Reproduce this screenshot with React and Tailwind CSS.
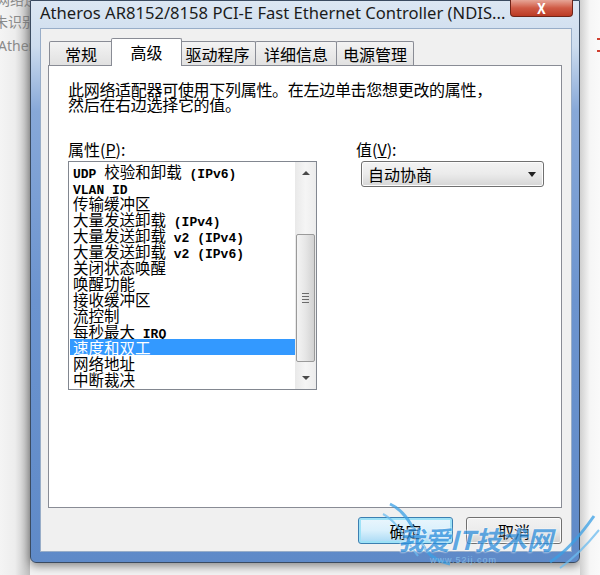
const CJK = /([\u4e00-\u9fff\u3000-\u303f\uff00-\uffef]+)/;

function Mixed({ text }) {
  return text
    .split(CJK)
    .filter(Boolean)
    .map((part, i) =>
      CJK.test(part) ? (
        <span key={i}>{part}</span>
      ) : (
        <span key={i} className="font-['Liberation_Mono'] text-[13px] font-bold whitespace-pre">
          {part}
        </span>
      )
    );
}

const properties = [
  'UDP 校验和卸载 (IPv6)',
  'VLAN ID',
  '传输缓冲区',
  '大量发送卸载 (IPv4)',
  '大量发送卸载 v2 (IPv4)',
  '大量发送卸载 v2 (IPv6)',
  '关闭状态唤醒',
  '唤醒功能',
  '接收缓冲区',
  '流控制',
  '每秒最大 IRQ',
  '速度和双工',
  '网络地址',
  '中断裁决',
];

const tabs = [
  { label: '常规', w: 'w-[64px]' },
  { label: '高级', w: 'w-[71px]', active: true },
  { label: '驱动程序', w: 'w-[77px]' },
  { label: '详细信息', w: 'w-[82px]' },
  { label: '电源管理', w: 'w-[78px]' },
];

function Tab({ label, w, active }) {
  if (active) {
    return (
      <div
        className={`relative z-10 -mx-[2px] -mb-px flex h-[28px] ${w} items-start justify-center rounded-t-[2px] border border-b-0 border-[#898c95] bg-white pt-[3px] text-[16px] leading-[20px]`}
      >
        {label}
      </div>
    );
  }
  return (
    <div
      className={`-ml-px flex h-[24px] ${w} items-start justify-center rounded-t-[2px] border border-b-0 border-[#898c95] bg-gradient-to-b from-[#f3f3f3] to-[#e1e1e1] pt-[2px] text-[16px] leading-[20px]`}
    >
      {label}
    </div>
  );
}

function ScrollBar() {
  return (
    <div className="flex w-[21px] flex-col bg-gradient-to-r from-[#e9e9e9] via-[#f5f5f5] to-[#ececec]">
      <div className="flex h-[18px] items-center justify-center pt-[4px]">
        <div className="h-0 w-0 border-x-[4px] border-b-[4px] border-x-transparent border-b-[#4a4a4a]" />
      </div>
      <div className="h-[54px]" />
      <div className="mx-[1px] flex h-[128px] items-center justify-center rounded-[2px] border border-[#9a9a9a] bg-gradient-to-r from-[#f4f4f4] via-[#e6e6e6] to-[#d2d2d2]">
        <div className="flex flex-col gap-[2px]">
          <div className="h-px w-[7px] bg-[#6b6b6b]" />
          <div className="h-px w-[7px] bg-[#6b6b6b]" />
          <div className="h-px w-[7px] bg-[#6b6b6b]" />
          <div className="h-px w-[7px] bg-[#6b6b6b]" />
        </div>
      </div>
      <div className="flex flex-1 items-end justify-center pb-[9px]">
        <div className="h-0 w-0 border-x-[4px] border-t-[4px] border-x-transparent border-t-[#4a4a4a]" />
      </div>
    </div>
  );
}

function Button({ children, primary }) {
  return (
    <div
      className={`flex h-[27px] items-center justify-center rounded-[3px] border text-[16px] leading-[20px] ${
        primary
          ? 'w-[95px] border-[#3c7fb1] bg-gradient-to-b from-[#eaf6fd] via-[#d9f0fc] to-[#a7d9f5] shadow-[inset_0_0_0_2px_#9ee2f7]'
          : 'w-[96px] border-[#707070] bg-gradient-to-b from-[#f2f2f2] via-[#ebebeb] to-[#cfcfcf] shadow-[inset_0_0_0_1px_#fbfbfb]'
      }`}
    >
      {children}
    </div>
  );
}

export default function App() {
  return (
    <div className="relative h-[575px] w-[600px] overflow-hidden bg-[#f3f3f3] font-['Noto_Sans_CJK_SC',sans-serif] text-black">
      <div className="flex">
        {/* desktop behind the dialog */}
        <div className="flex h-[575px] w-[30px] shrink-0 flex-col overflow-hidden bg-gradient-to-r from-[#f4f4f4] via-[#ededed] to-[#bdbdbd] text-[14px] leading-[16px] text-[#8a8a8a]">
          <div className="-mt-[9px] -ml-[4px] whitespace-nowrap">网络连接</div>
          <div className="mt-[6px] -ml-[6px] whitespace-nowrap">未识别</div>
          <div className="mt-[9px] -ml-[2px] whitespace-nowrap font-['Noto_Sans',sans-serif]">Atheros</div>
        </div>

        {/* dialog window */}
        <div className="flex h-[563px] w-[550px] shrink-0 flex-col rounded-b-[6px] border border-[#3b4b60] bg-[linear-gradient(180deg,#dce7f3_0px,#cddcee_45px,#87a8d8_110px,#6c94cf_300px,#5f8ac8_100%)] shadow-[0_3px_10px_rgba(0,0,0,0.45)]">
          <div className="flex h-[27px] items-start justify-between pl-[9px] pr-[6px]">
            <div className="pt-[2px] font-['Noto_Sans',sans-serif] text-[16.6px] leading-[20px] whitespace-nowrap text-[#1b1b1b]">
              Atheros AR8152/8158 PCI-E Fast Ethernet Controller (NDIS...
            </div>
            <div className="-mt-px flex h-[17px] w-[63px] shrink-0 items-center justify-center rounded-b-[4px] border border-t-0 border-[#6f2418] bg-gradient-to-b from-[#e6a597] via-[#cf5a45] to-[#bb3a24] text-[14px] font-bold leading-none text-white">
              X
            </div>
          </div>

          <div className="ml-[9px] mr-[7px] flex h-[524px] flex-col border border-[#98adc8] bg-[#f0f0f0]">
            {/* tabs */}
            <div className="ml-[9px] mt-[9px] flex items-end">
              {tabs.map((t) => (
                <Tab key={t.label} {...t} />
              ))}
            </div>

            {/* tab page */}
            <div className="ml-[7px] mr-[9px] flex h-[443px] flex-col border border-[#898c95] bg-white pl-[19px] pt-[16px]">
              <p className="text-[16px] leading-[15px] tracking-[-0.3px]">
                此网络适配器可使用下列属性。在左边单击您想更改的属性，
                <br />
                然后在右边选择它的值。
              </p>

              <div className="mt-[28px] flex">
                <div className="flex w-[249px] flex-col">
                  <div className="h-[21px] text-[16px] leading-[19px]">
                    属性(<span className="underline">P</span>):
                  </div>
                  <div className="flex h-[229px] border border-[#828790] bg-white">
                    <div className="flex flex-1 flex-col pl-px pt-px">
                      {properties.map((p) =>
                        p === '速度和双工' ? (
                          <div key={p} className="h-[16px] bg-[#3399ff] pl-[3px] text-[15.5px] leading-[16px] whitespace-nowrap text-white">
                            <Mixed text={p} />
                          </div>
                        ) : (
                          <div key={p} className="h-[16px] pl-[3px] text-[15.5px] leading-[16px] whitespace-nowrap">
                            <Mixed text={p} />
                          </div>
                        )
                      )}
                    </div>
                    <ScrollBar />
                  </div>
                </div>

                <div className="ml-[39px] flex flex-col">
                  <div className="h-[21px] text-[16px] leading-[19px]">
                    值(<span className="underline">V</span>):
                  </div>
                  <div className="ml-[5px] flex h-[26px] w-[183px] items-center justify-between rounded-[3px] border border-[#707070] bg-gradient-to-b from-[#f3f3f3] via-[#ebebeb] to-[#d6d6d6] pl-[6px] pr-[7px] shadow-[inset_0_0_0_1px_#fcfcfc]">
                    <span className="text-[16px] leading-[20px]">自动协商</span>
                    <div className="h-0 w-0 border-x-[4px] border-t-[5px] border-x-transparent border-t-[#222]" />
                  </div>
                </div>
              </div>
            </div>

            {/* buttons */}
            <div className="mr-[9px] mt-[9px] flex justify-end gap-[13px]">
              <Button primary>确定</Button>
              <Button>取消</Button>
            </div>
          </div>
        </div>

        <div className="relative h-[575px] flex-1 bg-gradient-to-r from-[#d0d0d0] via-[#f6f6f6] to-[#fafafa]">
          <div className="absolute right-0 top-[38px] h-[2px] w-[3px] bg-[#d04030]" />
          <div className="absolute right-0 top-[50px] h-[2px] w-[3px] bg-[#d04030]" />
        </div>
      </div>

      {/* watermark */}
      <div className="pointer-events-none absolute left-[380px] top-[502px] h-[73px] w-[220px] opacity-75">
        <svg width="220" height="73" viewBox="0 0 220 73" className="absolute left-0 top-0">
          <path d="M10 2 C 28 10, 34 30, 46 48 C 52 56, 60 60, 70 62" fill="none" stroke="#3aa0e6" strokeWidth="3" />
          <path d="M3 12 C 18 20, 24 36, 38 54" fill="none" stroke="#6bbcf0" strokeWidth="2" />
          <path d="M170 60 C 186 50, 200 34, 214 14" fill="none" stroke="#3aa0e6" strokeWidth="3" />
          <path d="M180 66 C 194 56, 206 44, 219 28" fill="none" stroke="#6bbcf0" strokeWidth="2" />
        </svg>
        <div className="absolute left-[18px] top-[23px] text-[26px] font-bold italic leading-[28px] whitespace-nowrap text-[#2f8fdc] [text-shadow:0_0_2px_#fff,0_0_2px_#fff]">
          我爱IT技术网
        </div>
        <div className="absolute left-[50px] top-[53px] font-['Liberation_Sans',sans-serif] text-[9px] leading-[10px] tracking-[1px] text-[#8fc6ee]">
          www.52ij.com
        </div>
      </div>
    </div>
  );
}
